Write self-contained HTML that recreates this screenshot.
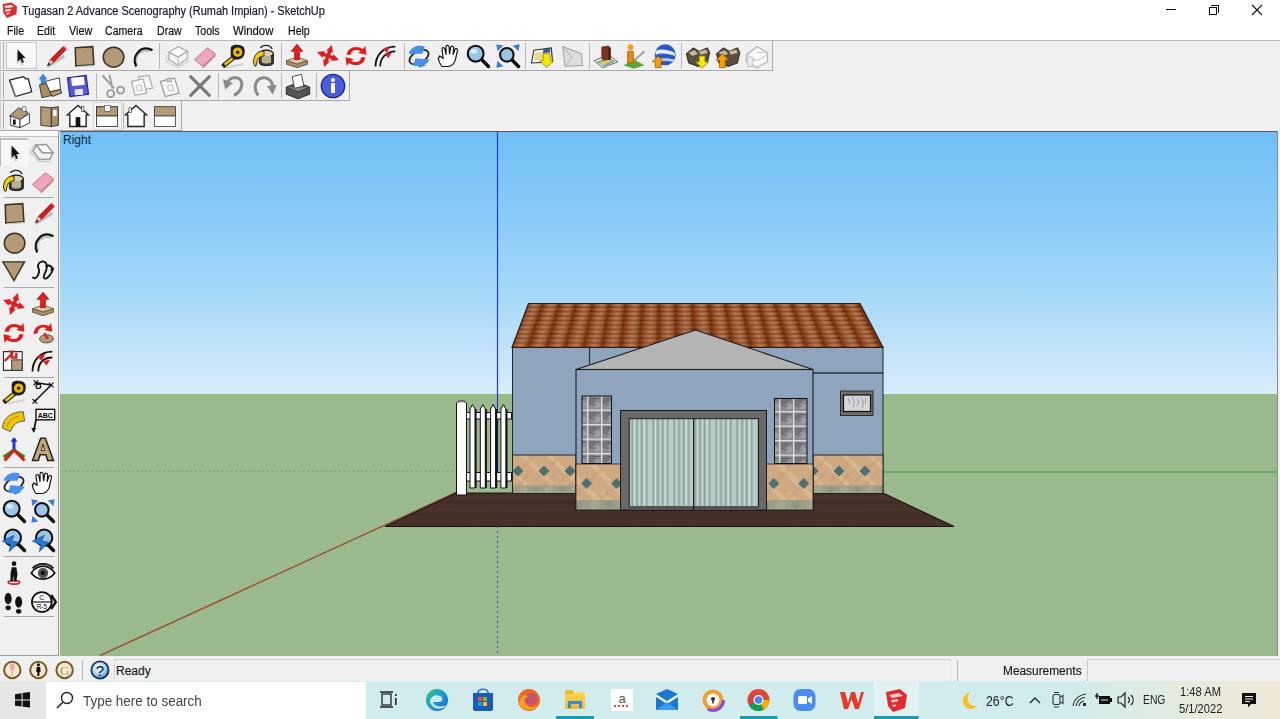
<!DOCTYPE html>
<html><head><meta charset="utf-8">
<style>
*{margin:0;padding:0;box-sizing:border-box}
html,body{width:1280px;height:719px;overflow:hidden;background:#f0f0f0;font-family:"Liberation Sans",sans-serif;font-size:12px;color:#000;position:relative}
.a{position:absolute}
svg.a{overflow:visible}
.menu{top:21px;height:20px;line-height:20px;white-space:nowrap;transform:scaleX(0.88);transform-origin:0 0;color:#111;-webkit-text-stroke:0.2px #111}
</style></head><body>
<div class="a" style="left:0;top:0;width:1280px;height:40px;background:#fff"></div>
<svg class="a" style="left:1px;top:1px" width="17" height="18" viewBox="0 0 17 18">
<path d="M1.5 3 L10.5 1.5 L16 5.5 L15.5 13 L6 17 L2.5 12 Z" fill="#e22a2a"/>
<path d="M3 5 L10 3.8 L13 6 L4.5 7.3 Z M3.8 8.8 L10 7.8 L10 9.8 L4.5 10.8 Z M5 12 L8.5 11.3 L8.5 13 L5.5 13.8 Z" fill="#fcdcdc"/>
</svg>
<div class="a" style="left:22px;top:1px;height:20px;line-height:20px;white-space:nowrap;transform:scaleX(0.913);transform-origin:0 0;color:#1a1a2a;-webkit-text-stroke:0.2px #1a1a2a">Tugasan 2 Advance Scenography (Rumah Impian) - SketchUp</div>
<div class="a" style="left:1166px;top:9px;width:10px;height:1px;background:#111"></div>
<div class="a" style="left:1209px;top:7px;width:8px;height:8px;border:1px solid #111;background:#fff"></div>
<div class="a" style="left:1211px;top:5px;width:8px;height:8px;border-top:1px solid #111;border-right:1px solid #111"></div>
<svg class="a" style="left:1251px;top:4px" width="12" height="12" viewBox="0 0 12 12"><path d="M1 1 L11 11 M11 1 L1 11" stroke="#111" stroke-width="1.1"/></svg>
<div class="a" style="left:0;top:40px;width:1280px;height:1px;background:#b9b9b9"></div>
<div class="a menu" style="left:7px;transform:scaleX(0.88)">File</div>
<div class="a menu" style="left:37px;transform:scaleX(0.88)">Edit</div>
<div class="a menu" style="left:69px;transform:scaleX(0.9)">View</div>
<div class="a menu" style="left:105px;transform:scaleX(0.88)">Camera</div>
<div class="a menu" style="left:157px;transform:scaleX(0.88)">Draw</div>
<div class="a menu" style="left:195px;transform:scaleX(0.88)">Tools</div>
<div class="a menu" style="left:233px;transform:scaleX(0.945)">Window</div>
<div class="a menu" style="left:288px;transform:scaleX(0.88)">Help</div>
<div class="a" style="left:0;top:70px;width:772px;height:1px;background:#a9a9a9"></div>
<div class="a" style="left:772px;top:41px;width:1px;height:30px;background:#a9a9a9"></div>
<div class="a" style="left:0;top:100px;width:349px;height:1px;background:#a9a9a9"></div>
<div class="a" style="left:349px;top:71px;width:1px;height:30px;background:#a9a9a9"></div>
<div class="a" style="left:0;top:130px;width:181px;height:1px;background:#a9a9a9"></div>
<div class="a" style="left:181px;top:101px;width:1px;height:30px;background:#a9a9a9"></div>
<div class="a" style="left:3px;top:42px;width:1px;height:27px;background:#b0b0b0"></div>
<div class="a" style="left:0;top:42px;width:1px;height:27px;background:#d0d0d0"></div>
<div class="a" style="left:3px;top:72px;width:1px;height:27px;background:#b0b0b0"></div>
<div class="a" style="left:0;top:72px;width:1px;height:27px;background:#d0d0d0"></div>
<div class="a" style="left:3px;top:102px;width:1px;height:27px;background:#b0b0b0"></div>
<div class="a" style="left:0;top:102px;width:1px;height:27px;background:#d0d0d0"></div>
<div class="a" style="left:6px;top:42px;width:31px;height:27px;border:1px solid #c8c8c8;background:#f7f7f7"></div>
<div class="a" style="left:93px;top:102px;width:29px;height:28px;border:1px solid #d8d8d8;background:#f6f6f6"></div>
<svg class="a" style="left:6.0px;top:42.0px" width="28" height="28" viewBox="0 0 24 24"><g transform="translate(3.5,3.5) scale(.72)"><path d="M9.5 5.5 L9.5 20 L12.8 16.8 L15 21.5 L17 20.6 L14.8 16 L19 15.8 Z" fill="#888" opacity=".45" transform="translate(-1.5,1.5)"/><path d="M9 4 L9 18.5 L12.3 15.3 L14.5 20 L16.5 19.1 L14.3 14.5 L18.5 14.3 Z" fill="#111"/></g></svg>
<svg class="a" style="left:41.0px;top:42.0px" width="28" height="28" viewBox="0 0 24 24"><path d="M6 21 L20 12" stroke="#bbb" stroke-width="2.5"/><path d="M5.5 20.5 L8 15 L19 4 L21.5 6.5 L10.5 17.5 Z" fill="#d81c1c" stroke="#600" stroke-width=".6"/><path d="M5.5 20.5 L8 15 L10.5 17.5 Z" fill="#e8d0a8"/><path d="M5.5 20.5 L6.8 17.5 L8.3 19 Z" fill="#222"/><path d="M19 4 L21.5 6.5 L22.3 5.7 L19.8 3.2Z" fill="#f5b"/></svg>
<svg class="a" style="left:70.0px;top:42.0px" width="28" height="28" viewBox="0 0 24 24"><path d="M4.5 5 L19.5 4 L20.5 19.5 L5 20.5 Z" fill="#b39b78" stroke="#3a3024" stroke-width="1.3"/><path d="M6 21.3 L21 20.3" stroke="#ccc" stroke-width="1"/></svg>
<svg class="a" style="left:99.0px;top:42.0px" width="28" height="28" viewBox="0 0 24 24"><ellipse cx="12.5" cy="13" rx="8.8" ry="8.5" fill="#b39b78" stroke="#3a3024" stroke-width="1.3"/></svg>
<svg class="a" style="left:128.0px;top:42.0px" width="28" height="28" viewBox="0 0 24 24"><path d="M8 20 C5 12 11 6 19 8" stroke="#bbb" stroke-width="1.4" fill="none"/><path d="M7 21 C2.5 12 11 2 21 7" stroke="#111" stroke-width="1.9" fill="none"/></svg>
<svg class="a" style="left:163.0px;top:42.0px" width="28" height="28" viewBox="0 0 24 24"><path d="M5 9 L13 4 L21 8 L13 13 Z" fill="#fff" stroke="#b4b4b4" stroke-width="1.2"/><path d="M5 9 L5 15 L13 20 L21 14 L21 8 L13 13 Z" fill="#f4f4f4" stroke="#b4b4b4" stroke-width="1.2"/><path d="M13 13 L13 20" stroke="#c4c4c4"/><path d="M3 11 L3 17 L13 22 L23 16" stroke="#d0d0d0" fill="none"/></svg>
<svg class="a" style="left:191.0px;top:42.0px" width="28" height="28" viewBox="0 0 24 24"><path d="M3 15 L14 5 L21 10 L10 21 Z" fill="#f2a4bd" stroke="#b07888" stroke-width=".8"/><path d="M10 21 L21 10 L21 12.5 L10 23 Z" fill="#c88"/><path d="M4 17 L20 13" stroke="#ccc" stroke-width="1" opacity=".4"/></svg>
<svg class="a" style="left:219.0px;top:42.0px" width="28" height="28" viewBox="0 0 24 24"><path d="M6 22 L21 19" stroke="#bbb" stroke-width="2" opacity=".5"/><path d="M10 6 C10 3 13 2 17 2.5 C21 3 22.5 5 22 9 C21.5 13 19.5 15 15 15 C11 15 10 13 10 10 Z" fill="#1e1e1e"/><circle cx="16" cy="8.7" r="4" fill="#f2b800"/><circle cx="16" cy="8.7" r="1.5" fill="#2a2a2a"/><path d="M3.5 18.5 L11 12.5 L13 15 L5.5 21 Z" fill="#f2c400" stroke="#222" stroke-width=".9"/><path d="M2.5 19 L5 22" stroke="#222" stroke-width="1.6"/></svg>
<svg class="a" style="left:250.0px;top:42.0px" width="28" height="28" viewBox="0 0 24 24"><path d="M8 10 L8 18 C8 21 20 21 20 18 L20 10 Z" fill="#3a3a36" stroke="#111" stroke-width=".8"/><ellipse cx="14" cy="10" rx="6" ry="3" fill="#d8d0b0" stroke="#111" stroke-width="1"/><path d="M10 12 L10 17 C10 19 18 19 18 17 L18 12" fill="#cfc6a4" opacity=".85"/><path d="M9 5 C11 2 17 2 19 6" stroke="#222" stroke-width="1.2" fill="none"/><path d="M12 8 C8 7 4 10 3 16 C3 19 4 21 5 21 L6 17 C6 14 9 12 12 12 Z" fill="#f2d200" stroke="#222" stroke-width=".8"/></svg>
<svg class="a" style="left:283.0px;top:42.0px" width="28" height="28" viewBox="0 0 24 24"><path d="M3 16 L12 13 L21 16 L12 19 Z" fill="#d8c8a8" stroke="#6b5b40" stroke-width=".8"/><path d="M3 16 L3 19 L12 22 L21 19 L21 16 L12 19 Z" fill="#a8906a" stroke="#6b5b40" stroke-width=".8"/><path d="M12 2 L17 8 L14 8 L14 15 L10 15 L10 8 L7 8 Z" fill="#e41e1e" stroke="#900" stroke-width=".6"/></svg>
<svg class="a" style="left:314.0px;top:42.0px" width="28" height="28" viewBox="0 0 24 24"><path d="M12 2 L15 8 L13.5 8 L13.5 10.5 L16 10.5 L16 9 L22 12 L16 15 L16 13.5 L13.5 13.5 L13.5 16 L15 16 L12 22 L9 16 L10.5 16 L10.5 13.5 L8 13.5 L8 15 L2 12 L8 9 L8 10.5 L10.5 10.5 L10.5 8 L9 8 Z" fill="#e11c1c" transform="rotate(20 12 12)"/></svg>
<svg class="a" style="left:342.0px;top:42.0px" width="28" height="28" viewBox="0 0 24 24"><path d="M4 11 C4.5 5 12 2 18 6 L20 3.5 L21 11 L14 9.5 L16 8 C12 5.5 8 7 7.5 11 Z" fill="#e11c1c"/><path d="M20 13 C19.5 19 12 22 6 18 L4 20.5 L3 13 L10 14.5 L8 16 C12 18.5 16 17 16.5 13 Z" fill="#e11c1c"/></svg>
<svg class="a" style="left:372.0px;top:42.0px" width="28" height="28" viewBox="0 0 24 24"><path d="M3 21 C3 12 9 4 20 4" stroke="#111" stroke-width="1.6" fill="none"/><path d="M7 21 C7 14 12 8 20 8" stroke="#111" stroke-width="1.4" fill="none"/><path d="M9 6 L15 4 L13 9 Z M11 10 L17 9 L14 14 Z" fill="#e11c1c"/></svg>
<svg class="a" style="left:405.0px;top:42.0px" width="28" height="28" viewBox="0 0 24 24"><ellipse cx="12" cy="13" rx="9" ry="5" stroke="#222" stroke-width="1.5" fill="none" transform="rotate(-30 12 13)"/><path d="M6 6 L12 3 L12 8 Z M18 20 L12 22 L12 17 Z" fill="#3b7fe0"/><path d="M3 10 C5 4 12 2 17 4 L15 10 Z M21 15 C19 20 12 22 7 20 L9 14 Z" fill="#4a90e8"/></svg>
<svg class="a" style="left:435.0px;top:42.0px" width="28" height="28" viewBox="0 0 24 24"><path d="M6 21 C3 17 2 14 4 12 L7 14 L6 6 C6 4.5 8 4.5 8.5 6 L9.5 11 L9.5 4 C9.5 2.5 11.5 2.5 12 4 L12.5 10.5 L13.5 4.5 C14 3 16 3.5 16 5 L15.5 11 L17 6.5 C17.5 5 19.5 5.5 19.3 7 L17.5 15 C17 18 14 21 11 21 Z" fill="#fff" stroke="#111" stroke-width="1"/></svg>
<svg class="a" style="left:464.0px;top:42.0px" width="28" height="28" viewBox="0 0 24 24"><path d="M14 14 L21 21" stroke="#111" stroke-width="3" stroke-linecap="round"/><circle cx="10" cy="10" r="6.8" fill="#9cc4e8" stroke="#111" stroke-width="1.8"/><ellipse cx="8.5" cy="8" rx="3" ry="2" fill="#d8ecfa"/></svg>
<svg class="a" style="left:494.0px;top:42.0px" width="28" height="28" viewBox="0 0 24 24"><path d="M14 14 L21 21" stroke="#111" stroke-width="3" stroke-linecap="round"/><circle cx="11" cy="11" r="5.8" fill="#9cc4e8" stroke="#111" stroke-width="1.8"/><path d="M2 2 L8 3 L3 8 Z M22 2 L16 3 L21 8 Z M2 22 L3 16 L8 21 Z" fill="#3d7fd6"/></svg>
<svg class="a" style="left:528.0px;top:42.0px" width="28" height="28" viewBox="0 0 24 24"><path d="M3 18 L5 7 L20 5 L21 17 Z" fill="#fff" stroke="#333" stroke-width="1"/><path d="M5 16 L6 9 L14 8 L14 15 Z" fill="#ead68c"/><path d="M13 6 L19 5.5 L19 9 L13 9.5 Z" fill="#3a5a90"/><path d="M13 10 L19 10 L19 16 L22 16 L16 22 L10 16 L13 16 Z" fill="#f5e800" stroke="#887700" stroke-width=".6"/></svg>
<svg class="a" style="left:558.0px;top:42.0px" width="28" height="28" viewBox="0 0 24 24"><path d="M4 4 L20 10 L21 20 L6 21 Z" fill="#ddd" stroke="#aaa" stroke-width="1"/><path d="M4 4 L12 13 L6 21" stroke="#bbb" fill="none"/></svg>
<svg class="a" style="left:592.0px;top:42.0px" width="28" height="28" viewBox="0 0 24 24"><path d="M2 16 L14 11 L22 17 L9 22 Z" fill="#fff" stroke="#555" stroke-width=".8"/><path d="M4 17 L14 13 L20 17 L10 21 Z" fill="#6cb0a0"/><path d="M6 18 L14 14.5 L17 16.5 L9 20 Z" fill="#e0c860"/><path d="M8 4 L14 3 L16 5 L16 15 L10 16 L8 14 Z" fill="#7a3424"/><path d="M14 5 L16 5 L16 15 L14 15.5 Z" fill="#4a1c12"/></svg>
<svg class="a" style="left:620.0px;top:42.0px" width="28" height="28" viewBox="0 0 24 24"><path d="M3 20 L12 15 L21 20 L12 23 Z" fill="#5aa63a"/><path d="M12 16 L21 8" stroke="#999" stroke-width="1.6"/><circle cx="9" cy="4.5" r="2.5" fill="#f0a020"/><path d="M6.5 8 L11.5 8 L11.5 18 L6.5 18 Z" fill="#e88a10" stroke="#a05a00" stroke-width=".6"/></svg>
<svg class="a" style="left:650.0px;top:42.0px" width="28" height="28" viewBox="0 0 24 24"><circle cx="13" cy="11" r="9" fill="#2a58c8"/><path d="M4.5 8 C9 5 16 7 21 9 L21.5 12 C16 10 9 9 5 11 Z" fill="#fff" opacity=".9"/><path d="M6 15 C11 13 17 14 21 15 L20 17 C15 16 10 16 7 17 Z" fill="#cde" opacity=".9"/><path d="M7 12 L12 17 L9.5 17 L9.5 22 L4.5 22 L4.5 17 L2 17 Z" fill="#f5a000" stroke="#905000" stroke-width=".6"/></svg>
<svg class="a" style="left:684.0px;top:42.0px" width="28" height="28" viewBox="0 0 24 24"><path d="M2 10 L8 5 L13 8 L20 5 L22 9 L20 18 L12 21 L4 18 Z" fill="#5a5040" stroke="#222" stroke-width=".8"/><path d="M4 9 L9 7 L12 10 L7 12 Z M13 8 L19 6.5 L20 9.5 L14 11 Z" fill="#c8b898"/><path d="M13 12 L18 12 L18 17 L21 17 L15.5 22.5 L10 17 L13 17 Z" fill="#f5ec00" stroke="#807000" stroke-width=".6"/></svg>
<svg class="a" style="left:713.0px;top:42.0px" width="28" height="28" viewBox="0 0 24 24"><path d="M3 10 L9 5 L14 8 L21 5 L23 9 L21 18 L13 21 L5 18 Z" fill="#5a5040" stroke="#222" stroke-width=".8"/><path d="M5 9 L10 7 L13 10 L8 12 Z M14 8 L20 6.5 L21 9.5 L15 11 Z" fill="#c8b898"/><path d="M8 10 L13.5 15.5 L10.5 15.5 L10.5 22 L5.5 22 L5.5 15.5 L2.5 15.5 Z" fill="#f5a000" stroke="#905000" stroke-width=".6"/></svg>
<svg class="a" style="left:743.0px;top:42.0px" width="28" height="28" viewBox="0 0 24 24"><path d="M3 11 L12 4 L21 9 L21 17 L12 22 L3 17 Z" fill="#fafafa" stroke="#bbb" stroke-width="1.2"/><path d="M12 9 L21 9 M3 11 L12 16 L21 11" stroke="#ccc" fill="none"/><path d="M2 16 L6 12 L10 16 L8 16 L8 21 L4 21 L4 16 Z" fill="#eee" stroke="#bbb" stroke-width=".8"/></svg>
<div class="a" style="left:159px;top:43px;width:1px;height:26px;background:#b8b8b8"></div>
<div class="a" style="left:281px;top:43px;width:1px;height:26px;background:#b8b8b8"></div>
<div class="a" style="left:404px;top:43px;width:1px;height:26px;background:#b8b8b8"></div>
<div class="a" style="left:525px;top:43px;width:1px;height:26px;background:#b8b8b8"></div>
<div class="a" style="left:589px;top:43px;width:1px;height:26px;background:#b8b8b8"></div>
<div class="a" style="left:681px;top:43px;width:1px;height:26px;background:#b8b8b8"></div>
<svg class="a" style="left:6.0px;top:72.0px" width="28" height="28" viewBox="0 0 24 24"><path d="M3 7 L15 4 L17 6 L19 5.5 L22 17 L8 21 Z" fill="#fff" stroke="#222" stroke-width="1.1"/><path d="M4 8 L8.5 21.5" stroke="#888" stroke-width="1"/></svg>
<svg class="a" style="left:36.0px;top:72.0px" width="28" height="28" viewBox="0 0 24 24"><path d="M3 11 L12 9 L14 20 L5 22 Z" fill="#a88c60" stroke="#333" stroke-width=".8"/><path d="M8 8 L20 5 L21 15 L12 17 Z" fill="#fff" stroke="#333" stroke-width=".8"/><path d="M12 17 L21 15 L22 18 L14 21 Z" fill="#b89a6c" stroke="#333" stroke-width=".8"/><path d="M3 6 L6 2 L9 6 L7.5 6 L7.5 10 L4.5 10 L4.5 6 Z" fill="#2e90e8" stroke="#1a5a9a" stroke-width=".6"/></svg>
<svg class="a" style="left:64.0px;top:72.0px" width="28" height="28" viewBox="0 0 24 24"><path d="M3 5 L19 3 L21 19 L5 21 Z" fill="#5a5ad8" stroke="#222296" stroke-width="1"/><path d="M6 5 L17 4 L17.8 11 L7 12 Z" fill="#fff"/><path d="M9 15 L16 14.3 L16.5 19.5 L9.5 20 Z" fill="#e8e8f8"/></svg>
<svg class="a" style="left:99.0px;top:72.0px" width="28" height="28" viewBox="0 0 24 24"><path d="M3 3 L13 14 M9 2.5 L11.5 14" stroke="#9a9a9a" stroke-width="1.6"/><circle cx="10" cy="18.5" r="3" fill="none" stroke="#999" stroke-width="1.6"/><circle cx="18.5" cy="15.5" r="3" fill="none" stroke="#999" stroke-width="1.6"/></svg>
<svg class="a" style="left:128.0px;top:72.0px" width="28" height="28" viewBox="0 0 24 24"><path d="M9 4 L18 3 L21 14 L12 15 Z" fill="#f6f6f6" stroke="#aaa"/><path d="M3 8 L13 6 L16 18 L6 20 Z" fill="#fafafa" stroke="#aaa"/><path d="M7 12 L11 11 L12 16 L8 16 Z" fill="none" stroke="#bbb" stroke-width=".8"/></svg>
<svg class="a" style="left:157.0px;top:72.0px" width="28" height="28" viewBox="0 0 24 24"><path d="M3 8 L15 5 L19 18 L7 21 Z" fill="#f6f6f6" stroke="#999"/><path d="M8 6 L12 5 L12.5 8 L8.5 8.5 Z" fill="#ccc" stroke="#999" stroke-width=".7"/><path d="M9 12 L13 11 L14 16 L10 16 Z" fill="none" stroke="#bbb" stroke-width=".8"/></svg>
<svg class="a" style="left:186.0px;top:72.0px" width="28" height="28" viewBox="0 0 24 24"><path d="M4 4 L20 20 M20 4 L4 20" stroke="#777" stroke-width="2.6" stroke-linecap="round"/></svg>
<svg class="a" style="left:220.0px;top:72.0px" width="28" height="28" viewBox="0 0 24 24"><path d="M12 20 C20 16 21 6 14 5 C11 4.5 8 6 7 8" stroke="#8a8a8a" stroke-width="2.6" fill="none"/><path d="M2.5 6 L11 9.5 L4.5 15 Z" fill="#8a8a8a"/></svg>
<svg class="a" style="left:250.0px;top:72.0px" width="28" height="28" viewBox="0 0 24 24"><path d="M7 20 C2 13 5 5 12 5 C16 5 19 8 19.5 12" stroke="#8a8a8a" stroke-width="2.6" fill="none"/><path d="M14.5 12 L23 11 L19.5 19.5 Z" fill="#8a8a8a"/></svg>
<svg class="a" style="left:284.0px;top:72.0px" width="28" height="28" viewBox="0 0 24 24"><path d="M2 13 L12 9 L22 13 L22 19 L12 23 L2 19 Z" fill="#555" stroke="#222" stroke-width=".8"/><path d="M2 13 L12 17 L22 13" fill="#888" stroke="#222" stroke-width=".6"/><path d="M7 4 L15 2 L17 12 L9 14 Z" fill="#fff" stroke="#444" stroke-width=".8"/></svg>
<svg class="a" style="left:319.0px;top:72.0px" width="28" height="28" viewBox="0 0 24 24"><circle cx="12" cy="12" r="10" fill="#4a5ce0" stroke="#1a2a80" stroke-width="1.2"/><circle cx="12" cy="6.8" r="1.7" fill="#fff"/><rect x="10.3" y="9.5" width="3.4" height="8.5" fill="#fff"/></svg>
<div class="a" style="left:96px;top:73px;width:1px;height:26px;background:#b8b8b8"></div>
<div class="a" style="left:218px;top:73px;width:1px;height:26px;background:#b8b8b8"></div>
<div class="a" style="left:281px;top:73px;width:1px;height:26px;background:#b8b8b8"></div>
<div class="a" style="left:316px;top:73px;width:1px;height:26px;background:#b8b8b8"></div>
<svg class="a" style="left:6.0px;top:102.0px" width="28" height="28" viewBox="0 0 24 24"><path d="M3 12 L11 5 L19 9 L12 16 Z" fill="#b39b78" stroke="#333" stroke-width=".8"/><path d="M4 12 L4 20 L12 22 L12 15 Z" fill="#fff" stroke="#333" stroke-width=".8"/><path d="M12 15 L20 10 L20 18 L12 22 Z" fill="#fff" stroke="#333" stroke-width=".8"/><rect x="6" y="15" width="2.3" height="4.5" fill="#111"/><path d="M14 4 L17 4 L17 8 L14 8 Z" fill="#fff" stroke="#555" stroke-width=".6"/></svg>
<svg class="a" style="left:35.0px;top:102.0px" width="28" height="28" viewBox="0 0 24 24"><path d="M5 4 L14 5 L14 21 L5 20 Z" fill="#b39b78" stroke="#333" stroke-width=".8"/><path d="M14 5 L20 4 L20 20 L14 21 Z" fill="#a88f6c" stroke="#333" stroke-width=".8"/><rect x="15.5" y="7" width="3" height="5" fill="#fff"/></svg>
<svg class="a" style="left:64.0px;top:102.0px" width="28" height="28" viewBox="0 0 24 24"><path d="M12 3 L21 11 L19 11 L19 21 L5 21 L5 11 L3 11 Z" fill="#fff" stroke="#222" stroke-width="1.2"/><rect x="10" y="13" width="4" height="8" fill="#111"/><rect x="15" y="4" width="2" height="4" fill="#fff" stroke="#333" stroke-width=".6"/></svg>
<svg class="a" style="left:93.0px;top:102.0px" width="28" height="28" viewBox="0 0 24 24"><rect x="3" y="4" width="18" height="8" fill="#b39b78" stroke="#333" stroke-width=".8"/><rect x="3" y="12" width="18" height="9" fill="#fff" stroke="#444" stroke-width=".8"/><rect x="10" y="3" width="5" height="5" fill="#fff" stroke="#555" stroke-width=".6"/></svg>
<svg class="a" style="left:122.0px;top:102.0px" width="28" height="28" viewBox="0 0 24 24"><path d="M12 3 L21 11 L19 11 L19 21 L5 21 L5 11 L3 11 Z" fill="#fff" stroke="#222" stroke-width="1.2"/><rect x="6" y="5" width="2" height="4" fill="#fff" stroke="#333" stroke-width=".6"/></svg>
<svg class="a" style="left:151.0px;top:102.0px" width="28" height="28" viewBox="0 0 24 24"><rect x="3" y="4" width="18" height="8" fill="#b39b78" stroke="#444" stroke-width=".8"/><rect x="3" y="12" width="18" height="9" fill="#fff" stroke="#555" stroke-width=".8"/></svg>
<div class="a" style="left:123px;top:103px;width:1px;height:26px;background:#b8b8b8"></div>
<div class="a" style="left:58px;top:131px;width:1px;height:525px;background:#9a9a9a"></div>
<div class="a" style="left:0;top:131px;width:58px;height:6px;background:#f9f9f9;border-bottom:1px solid #c4c4c4"></div>
<div class="a" style="left:0;top:138px;width:28px;height:28px;background:#f7f7f7;border-top:2px solid #c0c0c0;border-left:1px solid #b8b8b8"></div>
<svg class="a" style="left:0.0px;top:138.0px" width="28" height="28" viewBox="0 0 24 24"><g transform="translate(3.5,3.5) scale(.72)"><path d="M9.5 5.5 L9.5 20 L12.8 16.8 L15 21.5 L17 20.6 L14.8 16 L19 15.8 Z" fill="#888" opacity=".45" transform="translate(-1.5,1.5)"/><path d="M9 4 L9 18.5 L12.3 15.3 L14.5 20 L16.5 19.1 L14.3 14.5 L18.5 14.3 Z" fill="#111"/></g></svg>
<svg class="a" style="left:29.0px;top:138.0px" width="28" height="28" viewBox="0 0 24 24"><g transform="rotate(25 12 12)"><path d="M4 9 L12 5 L20 9 L12 13 Z" fill="#fff" stroke="#9a9a9a" stroke-width="1.3"/><path d="M4 9 L4 15 L12 19 L20 15 L20 9 L12 13 Z" fill="#f2f2f2" stroke="#9a9a9a" stroke-width="1.3"/><path d="M2.5 10 L2.5 16.5 L12 21 L21.5 16.5" stroke="#cfcfcf" stroke-width="1.2" fill="none"/></g></svg>
<svg class="a" style="left:0.0px;top:167.0px" width="28" height="28" viewBox="0 0 24 24"><path d="M8 10 L8 18 C8 21 20 21 20 18 L20 10 Z" fill="#3a3a36" stroke="#111" stroke-width=".8"/><ellipse cx="14" cy="10" rx="6" ry="3" fill="#d8d0b0" stroke="#111" stroke-width="1"/><path d="M10 12 L10 17 C10 19 18 19 18 17 L18 12" fill="#cfc6a4" opacity=".85"/><path d="M9 5 C11 2 17 2 19 6" stroke="#222" stroke-width="1.2" fill="none"/><path d="M12 8 C8 7 4 10 3 16 C3 19 4 21 5 21 L6 17 C6 14 9 12 12 12 Z" fill="#f2d200" stroke="#222" stroke-width=".8"/></svg>
<svg class="a" style="left:29.0px;top:167.0px" width="28" height="28" viewBox="0 0 24 24"><path d="M3 15 L14 5 L21 10 L10 21 Z" fill="#f2a4bd" stroke="#b07888" stroke-width=".8"/><path d="M10 21 L21 10 L21 12.5 L10 23 Z" fill="#c88"/><path d="M4 17 L20 13" stroke="#ccc" stroke-width="1" opacity=".4"/></svg>
<svg class="a" style="left:0.0px;top:199.0px" width="28" height="28" viewBox="0 0 24 24"><path d="M4.5 5 L19.5 4 L20.5 19.5 L5 20.5 Z" fill="#b39b78" stroke="#3a3024" stroke-width="1.3"/><path d="M6 21.3 L21 20.3" stroke="#ccc" stroke-width="1"/></svg>
<svg class="a" style="left:29.0px;top:199.0px" width="28" height="28" viewBox="0 0 24 24"><path d="M6 21 L20 12" stroke="#bbb" stroke-width="2.5"/><path d="M5.5 20.5 L8 15 L19 4 L21.5 6.5 L10.5 17.5 Z" fill="#d81c1c" stroke="#600" stroke-width=".6"/><path d="M5.5 20.5 L8 15 L10.5 17.5 Z" fill="#e8d0a8"/><path d="M5.5 20.5 L6.8 17.5 L8.3 19 Z" fill="#222"/><path d="M19 4 L21.5 6.5 L22.3 5.7 L19.8 3.2Z" fill="#f5b"/></svg>
<svg class="a" style="left:0.0px;top:228.0px" width="28" height="28" viewBox="0 0 24 24"><ellipse cx="12.5" cy="13" rx="8.8" ry="8.5" fill="#b39b78" stroke="#3a3024" stroke-width="1.3"/></svg>
<svg class="a" style="left:29.0px;top:228.0px" width="28" height="28" viewBox="0 0 24 24"><path d="M8 20 C5 12 11 6 19 8" stroke="#bbb" stroke-width="1.4" fill="none"/><path d="M7 21 C2.5 12 11 2 21 7" stroke="#111" stroke-width="1.9" fill="none"/></svg>
<svg class="a" style="left:0.0px;top:256.0px" width="28" height="28" viewBox="0 0 24 24"><path d="M2.5 5 L21 5 L12 21 Z" fill="#b39b78" stroke="#3a3024" stroke-width="1.2"/></svg>
<svg class="a" style="left:29.0px;top:256.0px" width="28" height="28" viewBox="0 0 24 24"><path d="M3 18 C6 22 10 14 8 10 C6 6 13 2 15 7 C17 12 11 17 13 19 C15 21 20 15 21 10 M14 9 C18 7 21 9 19 13" stroke="#111" stroke-width="1.6" fill="none"/></svg>
<svg class="a" style="left:0.0px;top:290.0px" width="28" height="28" viewBox="0 0 24 24"><path d="M12 2 L15 8 L13.5 8 L13.5 10.5 L16 10.5 L16 9 L22 12 L16 15 L16 13.5 L13.5 13.5 L13.5 16 L15 16 L12 22 L9 16 L10.5 16 L10.5 13.5 L8 13.5 L8 15 L2 12 L8 9 L8 10.5 L10.5 10.5 L10.5 8 L9 8 Z" fill="#e11c1c" transform="rotate(20 12 12)"/></svg>
<svg class="a" style="left:29.0px;top:290.0px" width="28" height="28" viewBox="0 0 24 24"><path d="M3 16 L12 13 L21 16 L12 19 Z" fill="#d8c8a8" stroke="#6b5b40" stroke-width=".8"/><path d="M3 16 L3 19 L12 22 L21 19 L21 16 L12 19 Z" fill="#a8906a" stroke="#6b5b40" stroke-width=".8"/><path d="M12 2 L17 8 L14 8 L14 15 L10 15 L10 8 L7 8 Z" fill="#e41e1e" stroke="#900" stroke-width=".6"/></svg>
<svg class="a" style="left:0.0px;top:319.0px" width="28" height="28" viewBox="0 0 24 24"><path d="M4 11 C4.5 5 12 2 18 6 L20 3.5 L21 11 L14 9.5 L16 8 C12 5.5 8 7 7.5 11 Z" fill="#e11c1c"/><path d="M20 13 C19.5 19 12 22 6 18 L4 20.5 L3 13 L10 14.5 L8 16 C12 18.5 16 17 16.5 13 Z" fill="#e11c1c"/></svg>
<svg class="a" style="left:29.0px;top:319.0px" width="28" height="28" viewBox="0 0 24 24"><path d="M4 13 C4 6 11 3 17 6 L19 3.5 L20 11 L13 9.5 L15 8 C11 6 7.5 8.5 7.5 12 Z" fill="#e11c1c"/><ellipse cx="15" cy="17" rx="6" ry="3.5" fill="#b39b78" stroke="#5a4a34" stroke-width=".8"/><path d="M13 12 L16 17" stroke="#e11c1c" stroke-width="2"/></svg>
<svg class="a" style="left:0.0px;top:347.0px" width="28" height="28" viewBox="0 0 24 24"><path d="M3 4 L19 4 L19 20 L3 20 Z" fill="#fff" stroke="#333" stroke-width="1"/><path d="M10 11 L19 11 L19 20 L10 20 Z" fill="#b39b78" stroke="#333" stroke-width=".8"/><path d="M4 12 L10 6 L10 9 L14 9 L14 5" stroke="#e11c1c" stroke-width="2" fill="none"/><path d="M7 3 L12 3 L11 8 Z" fill="#e11c1c"/></svg>
<svg class="a" style="left:29.0px;top:347.0px" width="28" height="28" viewBox="0 0 24 24"><path d="M3 21 C3 12 9 4 20 4" stroke="#111" stroke-width="1.6" fill="none"/><path d="M8 21 C8 14 12 9 20 9" stroke="#111" stroke-width="1.6" fill="none"/><path d="M7 8 L14 6 L11 12 Z M12 12 L18 11 L15 16 Z" fill="#e11c1c"/></svg>
<svg class="a" style="left:0.0px;top:378.0px" width="28" height="28" viewBox="0 0 24 24"><path d="M6 22 L21 19" stroke="#bbb" stroke-width="2" opacity=".5"/><path d="M10 6 C10 3 13 2 17 2.5 C21 3 22.5 5 22 9 C21.5 13 19.5 15 15 15 C11 15 10 13 10 10 Z" fill="#1e1e1e"/><circle cx="16" cy="8.7" r="4" fill="#f2b800"/><circle cx="16" cy="8.7" r="1.5" fill="#2a2a2a"/><path d="M3.5 18.5 L11 12.5 L13 15 L5.5 21 Z" fill="#f2c400" stroke="#222" stroke-width=".9"/><path d="M2.5 19 L5 22" stroke="#222" stroke-width="1.6"/></svg>
<svg class="a" style="left:29.0px;top:378.0px" width="28" height="28" viewBox="0 0 24 24"><path d="M4 6 L8 2 M8 6 L4 2 M17 4 L21 8 M21 4 L17 8 M3 22 L7 18 M7 22 L3 18" stroke="#111" stroke-width="1"/><path d="M6 4 L19 6 M5 20 L19 6" stroke="#111" stroke-width="1.3"/><circle cx="8" cy="7" r="2" fill="none" stroke="#111"/></svg>
<svg class="a" style="left:0.0px;top:407.0px" width="28" height="28" viewBox="0 0 24 24"><path d="M2 18 C3 9 10 4 20 4 L21 12 C15 12 11 15 9 21 Z" fill="#f2c400" stroke="#555" stroke-width=".8"/><path d="M6 17 C7 12 11 9 16 8" stroke="#a08000" stroke-width=".8" fill="none"/></svg>
<svg class="a" style="left:29.0px;top:407.0px" width="28" height="28" viewBox="0 0 24 24"><rect x="6" y="2" width="16" height="9" fill="#fff" stroke="#111" stroke-width="1.2"/><text x="14" y="9" font-size="6" font-family="Liberation Sans" font-weight="bold" text-anchor="middle">ABC</text><path d="M6 11 L4 21" stroke="#111" stroke-width="1.5"/><path d="M2 18 L4 22 L6 18 Z" fill="#111"/></svg>
<svg class="a" style="left:0.0px;top:436.0px" width="28" height="28" viewBox="0 0 24 24"><path d="M12 12 L12 2" stroke="#1a3ad8" stroke-width="2.6"/><path d="M9 5 L12 1 L15 5 Z" fill="#1a3ad8"/><path d="M12 12 L3 18 M12 12 L21 18" stroke="#1a9a1a" stroke-width="2.6"/><path d="M12 12 L4 21" stroke="#d81a1a" stroke-width="2.6"/><path d="M12 12 L21 21" stroke="#d81a1a" stroke-width="2.6"/></svg>
<svg class="a" style="left:29.0px;top:436.0px" width="28" height="28" viewBox="0 0 24 24"><path d="M3 21 L10 2 L14 2 L21 21 L16 21 L14.5 16 L9.5 16 L8 21 Z" fill="#c0a878" stroke="#222" stroke-width="1.3"/><path d="M10.5 12.5 L13.5 12.5 L12 7 Z" fill="#f0f0f0" stroke="#222" stroke-width=".8"/></svg>
<svg class="a" style="left:0.0px;top:469.0px" width="28" height="28" viewBox="0 0 24 24"><ellipse cx="12" cy="13" rx="9" ry="5" stroke="#222" stroke-width="1.5" fill="none" transform="rotate(-30 12 13)"/><path d="M6 6 L12 3 L12 8 Z M18 20 L12 22 L12 17 Z" fill="#3b7fe0"/><path d="M3 10 C5 4 12 2 17 4 L15 10 Z M21 15 C19 20 12 22 7 20 L9 14 Z" fill="#4a90e8"/></svg>
<svg class="a" style="left:29.0px;top:469.0px" width="28" height="28" viewBox="0 0 24 24"><path d="M6 21 C3 17 2 14 4 12 L7 14 L6 6 C6 4.5 8 4.5 8.5 6 L9.5 11 L9.5 4 C9.5 2.5 11.5 2.5 12 4 L12.5 10.5 L13.5 4.5 C14 3 16 3.5 16 5 L15.5 11 L17 6.5 C17.5 5 19.5 5.5 19.3 7 L17.5 15 C17 18 14 21 11 21 Z" fill="#fff" stroke="#111" stroke-width="1"/></svg>
<svg class="a" style="left:0.0px;top:497.0px" width="28" height="28" viewBox="0 0 24 24"><path d="M14 14 L21 21" stroke="#111" stroke-width="3" stroke-linecap="round"/><circle cx="10" cy="10" r="6.8" fill="#9cc4e8" stroke="#111" stroke-width="1.8"/><ellipse cx="8.5" cy="8" rx="3" ry="2" fill="#d8ecfa"/></svg>
<svg class="a" style="left:29.0px;top:497.0px" width="28" height="28" viewBox="0 0 24 24"><path d="M14 14 L21 21" stroke="#111" stroke-width="3" stroke-linecap="round"/><circle cx="11" cy="11" r="5.8" fill="#9cc4e8" stroke="#111" stroke-width="1.8"/><path d="M2 2 L8 3 L3 8 Z M22 2 L16 3 L21 8 Z M2 22 L3 16 L8 21 Z" fill="#3d7fd6"/></svg>
<svg class="a" style="left:0.0px;top:526.0px" width="28" height="28" viewBox="0 0 24 24"><path d="M15 15 L21 21" stroke="#111" stroke-width="3" stroke-linecap="round"/><circle cx="11" cy="10" r="7" fill="#9cc4e8" stroke="#111" stroke-width="1.8"/><path d="M2 13 L12 8 L10 13 L16 14 L8 22 L9 16 Z" fill="#2a78d8" stroke="#134a90" stroke-width=".6"/></svg>
<svg class="a" style="left:29.0px;top:526.0px" width="28" height="28" viewBox="0 0 24 24"><path d="M15 15 L21 21" stroke="#111" stroke-width="3" stroke-linecap="round"/><circle cx="13" cy="10" r="7" fill="#9cc4e8" stroke="#111" stroke-width="1.8"/><path d="M3 13 L13 8 L11 13 L17 14 L9 22 L10 16 Z" fill="#2a78d8" stroke="#134a90" stroke-width=".6"/></svg>
<svg class="a" style="left:0.0px;top:559.0px" width="28" height="28" viewBox="0 0 24 24"><ellipse cx="12" cy="20" rx="5" ry="1.5" fill="none" stroke="#d81a1a" stroke-width="1.4"/><circle cx="12" cy="4" r="2" fill="#111"/><path d="M10 7 L14 7 L15 13 L14 19 L12 19 L12 14 L11 19 L9 19 L9 13 Z" fill="#111"/></svg>
<svg class="a" style="left:29.0px;top:559.0px" width="28" height="28" viewBox="0 0 24 24"><path d="M2 12 C7 4 17 4 22 12 C17 19 7 19 2 12 Z" fill="#fff" stroke="#111" stroke-width="1.5"/><circle cx="12" cy="12" r="4.5" fill="#555"/><circle cx="12" cy="12" r="2" fill="#111"/><path d="M3 8 C8 3 16 3 21 8" stroke="#111" stroke-width="1.5" fill="none"/></svg>
<svg class="a" style="left:0.0px;top:588.0px" width="28" height="28" viewBox="0 0 24 24"><ellipse cx="7" cy="9" rx="3" ry="5" fill="#111"/><ellipse cx="7" cy="17" rx="2.3" ry="2" fill="#111"/><ellipse cx="16" cy="12" rx="3" ry="5" fill="#111"/><ellipse cx="16" cy="20" rx="2.3" ry="2" fill="#111"/></svg>
<svg class="a" style="left:29.0px;top:588.0px" width="28" height="28" viewBox="0 0 24 24"><circle cx="11" cy="12" r="8.5" fill="#fff" stroke="#111" stroke-width="1.5"/><path d="M2 12 L20 12" stroke="#111" stroke-width="1"/><text x="11" y="10" font-size="6" font-family="Liberation Sans" text-anchor="middle">C</text><text x="11" y="18" font-size="5.5" font-family="Liberation Sans" text-anchor="middle">R-5</text><path d="M19 6 L23 12 L19 18" stroke="#111" stroke-width="2" fill="none"/></svg>
<div class="a" style="left:4px;top:197px;width:50px;height:1px;background:#a8a8a8"></div>
<div class="a" style="left:4px;top:287px;width:50px;height:1px;background:#a8a8a8"></div>
<div class="a" style="left:4px;top:377px;width:50px;height:1px;background:#a8a8a8"></div>
<div class="a" style="left:4px;top:467px;width:50px;height:1px;background:#a8a8a8"></div>
<div class="a" style="left:4px;top:556px;width:50px;height:1px;background:#a8a8a8"></div>
<div class="a" style="left:4px;top:616px;width:50px;height:1px;background:#a8a8a8"></div>
<svg class="a" style="left:60px;top:131px" width="1218" height="525" viewBox="60 131 1218 525">
<defs>
<linearGradient id="sky" x1="0" y1="0" x2="0" y2="1"><stop offset="0" stop-color="#6fc0f6"/><stop offset=".33" stop-color="#89cbf7"/><stop offset=".66" stop-color="#aadaf8"/><stop offset="1" stop-color="#d9edfb"/></linearGradient>
<linearGradient id="rcol" x1="0" y1="0" x2="1" y2="0"><stop offset="0" stop-color="#76320f"/><stop offset=".28" stop-color="#a85c30"/><stop offset=".55" stop-color="#b67c52"/><stop offset=".8" stop-color="#a86238"/><stop offset="1" stop-color="#76320f"/></linearGradient>
<linearGradient id="rrow" x1="0" y1="0" x2="0" y2="1"><stop offset="0" stop-color="#d09a6a" stop-opacity=".2"/><stop offset=".5" stop-color="#000" stop-opacity="0"/><stop offset="1" stop-color="#5a2008" stop-opacity=".55"/></linearGradient>
<pattern id="roofc" patternUnits="userSpaceOnUse" x="10.05" y="0" width="16.25" height="600" patternTransform="skewX(7)"><rect width="16.25" height="600" fill="url(#rcol)"/></pattern>
<pattern id="roofr" patternUnits="userSpaceOnUse" x="0" y="303.5" width="1200" height="4.45"><rect width="1200" height="4.45" fill="url(#rrow)"/></pattern>
<pattern id="tile" patternUnits="userSpaceOnUse" x="505" y="455" width="26" height="38">
<rect width="26" height="38" fill="#cfa982"/>
<path d="M-4 4 L22 30 M9 -9 L35 17 M-17 17 L9 43" stroke="#dfc094" stroke-width="4" opacity=".6"/>
<path d="M4 -6 L-22 20 M30 0 L4 26 M30 13 L8 35" stroke="#c0987a" stroke-width="3" opacity=".4"/>
<path d="M13 10.5 L18.5 16 L13 21.5 L7.5 16 Z" fill="#4a7070"/>
<rect y="30.5" width="26" height="7.5" fill="#9c9e8a"/>
<ellipse cx="5" cy="34" rx="3.5" ry="3" fill="#84907f" opacity=".55"/><ellipse cx="18" cy="34.5" rx="4" ry="3" fill="#b0aa94" opacity=".6"/>
</pattern>
<pattern id="tileR" patternUnits="userSpaceOnUse" x="826" y="455" width="26" height="38">
<rect width="26" height="38" fill="#cfa982"/>
<path d="M-4 4 L22 30 M9 -9 L35 17 M-17 17 L9 43" stroke="#dfc094" stroke-width="4" opacity=".6"/>
<path d="M4 -6 L-22 20 M30 0 L4 26 M30 13 L8 35" stroke="#c0987a" stroke-width="3" opacity=".4"/>
<path d="M13 10.5 L18.5 16 L13 21.5 L7.5 16 Z" fill="#4a7070"/>
<rect y="30.5" width="26" height="7.5" fill="#9c9e8a"/>
<ellipse cx="5" cy="34" rx="3.5" ry="3" fill="#84907f" opacity=".55"/><ellipse cx="18" cy="34.5" rx="4" ry="3" fill="#b0aa94" opacity=".6"/>
</pattern>
<pattern id="tile2" patternUnits="userSpaceOnUse" x="571.6" y="464" width="30" height="46">
<rect width="30" height="46" fill="#cfa982"/>
<path d="M-5 5 L31 41 M10 -10 L40 20 M-20 10 L10 40" stroke="#dfc096" stroke-width="5" opacity=".6"/>
<path d="M5 -5 L-25 25 M35 0 L0 35" stroke="#c0987a" stroke-width="4" opacity=".4"/>
<path d="M15 14 L20.5 19.5 L15 25 L9.5 19.5 Z" fill="#4a7070"/>
<rect y="36" width="30" height="10" fill="#9c9e8a"/>
<ellipse cx="7" cy="41" rx="4.5" ry="4" fill="#84907f" opacity=".55"/><ellipse cx="22" cy="41" rx="5" ry="4" fill="#b0aa94" opacity=".6"/>
</pattern>
<pattern id="tile2R" patternUnits="userSpaceOnUse" x="758.7" y="464" width="30" height="46">
<rect width="30" height="46" fill="#cfa982"/>
<path d="M-5 5 L31 41 M10 -10 L40 20 M-20 10 L10 40" stroke="#dfc096" stroke-width="5" opacity=".6"/>
<path d="M5 -5 L-25 25 M35 0 L0 35" stroke="#c0987a" stroke-width="4" opacity=".4"/>
<path d="M15 14 L20.5 19.5 L15 25 L9.5 19.5 Z" fill="#4a7070"/>
<rect y="36" width="30" height="10" fill="#9c9e8a"/>
<ellipse cx="7" cy="41" rx="4.5" ry="4" fill="#84907f" opacity=".55"/><ellipse cx="22" cy="41" rx="5" ry="4" fill="#b0aa94" opacity=".6"/>
</pattern>
<radialGradient id="marb" cx=".5" cy=".5" r=".6"><stop offset="0" stop-color="#5e5e64"/><stop offset=".55" stop-color="#86868c"/><stop offset="1" stop-color="#9c9ca2"/></radialGradient>
<pattern id="glass" patternUnits="userSpaceOnUse" x="587" y="409.5" width="14" height="14.5"><rect width="14" height="14.5" fill="#8a8a90"/>
<ellipse cx="5" cy="5" rx="4" ry="3" fill="#68686e" opacity=".7"/>
<ellipse cx="10" cy="10" rx="3.5" ry="3" fill="#a4a4aa" opacity=".8"/>
<path d="M2 9 C4 7 6 12 9 9 M7 3 C9 5 11 2 13 4" stroke="#505056" stroke-width="1.1" fill="none" opacity=".7"/>
<rect x="-1" width="2.4" height="14.5" fill="#e2e6e6" opacity=".9"/>
<rect y="-1" width="14" height="2.4" fill="#e2e6e6" opacity=".9"/>
</pattern>
<pattern id="glassR" patternUnits="userSpaceOnUse" x="779" y="411" width="14" height="14.5"><rect width="14" height="14.5" fill="#8a8a90"/>
<ellipse cx="5" cy="5" rx="4" ry="3" fill="#68686e" opacity=".7"/>
<ellipse cx="10" cy="10" rx="3.5" ry="3" fill="#a4a4aa" opacity=".8"/>
<path d="M2 9 C4 7 6 12 9 9 M7 3 C9 5 11 2 13 4" stroke="#505056" stroke-width="1.1" fill="none" opacity=".7"/>
<rect x="-1" width="2.4" height="14.5" fill="#e2e6e6" opacity=".9"/>
<rect y="-1" width="14" height="2.4" fill="#e2e6e6" opacity=".9"/>
</pattern>
<pattern id="door" patternUnits="userSpaceOnUse" x="629" y="419" width="21" height="90">
<rect width="21" height="90" fill="#aabeb8"/>
<rect x="0.5" width="1" height="90" fill="#c6dcd6"/>
<rect x="2.5" width="1.5" height="90" fill="#94a8a2"/>
<rect x="5" width="1" height="90" fill="#cce2dc"/>
<rect x="7" width="2" height="90" fill="#9cb0aa"/>
<rect x="10" width="1" height="90" fill="#c2d8d2"/>
<rect x="12" width="1.5" height="90" fill="#92a6a0"/>
<rect x="14.5" width="1.3" height="90" fill="#d0e6e0"/>
<rect x="17" width="1.5" height="90" fill="#98aca6"/>
<rect x="19.5" width="1" height="90" fill="#c4dad4"/>
</pattern>
<pattern id="wood" patternUnits="userSpaceOnUse" x="0" y="493" width="160" height="34">
<rect width="160" height="34" fill="#46302a"/>
<path d="M0 4 C40 3 80 6 160 4.5" stroke="#503830" stroke-width="2" fill="none" opacity=".5"/>
<path d="M0 10 C50 11 100 8 160 10" stroke="#3c2822" stroke-width="2.5" fill="none" opacity=".5"/>
<path d="M0 16 C30 15 90 18 160 16" stroke="#4e362e" stroke-width="2" fill="none" opacity=".5"/>
<path d="M0 22 C60 23 110 20 160 22" stroke="#3c2822" stroke-width="2" fill="none" opacity=".5"/>
<path d="M0 28 C40 27 100 30 160 28" stroke="#50362e" stroke-width="2" fill="none" opacity=".5"/>
</pattern>
<clipPath id="roofclip"><path d="M528.5 303.5 L860 303.5 L883 347.5 L512 347.5 Z"/></clipPath>
<filter id="rblur" x="-5%" y="-20%" width="110%" height="140%"><feGaussianBlur stdDeviation="0.7"/></filter>
<pattern id="rr0" patternUnits="userSpaceOnUse" x="542.01" y="303.50" width="16.675" height="4.45"><rect width="16.675" height="4.45" fill="url(#rcol)"/><rect width="16.675" height="4.45" fill="url(#rrow)"/></pattern>
<pattern id="rr1" patternUnits="userSpaceOnUse" x="540.51" y="307.95" width="16.875" height="4.45"><rect width="16.875" height="4.45" fill="url(#rcol)"/><rect width="16.875" height="4.45" fill="url(#rrow)"/></pattern>
<pattern id="rr2" patternUnits="userSpaceOnUse" x="539.01" y="312.40" width="17.074" height="4.45"><rect width="17.074" height="4.45" fill="url(#rcol)"/><rect width="17.074" height="4.45" fill="url(#rrow)"/></pattern>
<pattern id="rr3" patternUnits="userSpaceOnUse" x="537.52" y="316.85" width="17.274" height="4.45"><rect width="17.274" height="4.45" fill="url(#rcol)"/><rect width="17.274" height="4.45" fill="url(#rrow)"/></pattern>
<pattern id="rr4" patternUnits="userSpaceOnUse" x="536.02" y="321.30" width="17.474" height="4.45"><rect width="17.474" height="4.45" fill="url(#rcol)"/><rect width="17.474" height="4.45" fill="url(#rrow)"/></pattern>
<pattern id="rr5" patternUnits="userSpaceOnUse" x="534.52" y="325.75" width="17.674" height="4.45"><rect width="17.674" height="4.45" fill="url(#rcol)"/><rect width="17.674" height="4.45" fill="url(#rrow)"/></pattern>
<pattern id="rr6" patternUnits="userSpaceOnUse" x="533.02" y="330.20" width="17.873" height="4.45"><rect width="17.873" height="4.45" fill="url(#rcol)"/><rect width="17.873" height="4.45" fill="url(#rrow)"/></pattern>
<pattern id="rr7" patternUnits="userSpaceOnUse" x="531.53" y="334.65" width="18.073" height="4.45"><rect width="18.073" height="4.45" fill="url(#rcol)"/><rect width="18.073" height="4.45" fill="url(#rrow)"/></pattern>
<pattern id="rr8" patternUnits="userSpaceOnUse" x="530.03" y="339.10" width="18.273" height="4.45"><rect width="18.273" height="4.45" fill="url(#rcol)"/><rect width="18.273" height="4.45" fill="url(#rrow)"/></pattern>
<pattern id="rr9" patternUnits="userSpaceOnUse" x="528.53" y="343.55" width="18.473" height="4.45"><rect width="18.473" height="4.45" fill="url(#rcol)"/><rect width="18.473" height="4.45" fill="url(#rrow)"/></pattern>
</defs>
<rect x="60" y="131" width="1218" height="525" fill="#9aba8e"/>
<rect x="60" y="132" width="1218" height="262" fill="url(#sky)"/>
<rect x="60" y="131" width="1218" height="1" fill="#5a5a5a"/>
<rect x="1277" y="131" width="1" height="525" fill="#8a8a8a"/>
<!-- axes -->
<line x1="60" y1="471.5" x2="456" y2="471.5" stroke="#4aa84a" stroke-width="1" stroke-dasharray="1.5 3" opacity=".8"/>
<line x1="883" y1="472" x2="1277" y2="472" stroke="#22a822" stroke-width="1.2"/>
<line x1="497.5" y1="132" x2="497.5" y2="412" stroke="#2a3ac8" stroke-width="1.2"/>
<line x1="497.5" y1="526" x2="497.5" y2="656" stroke="#3a4ab8" stroke-width="1" stroke-dasharray="2 3"/>
<line x1="456" y1="492.5" x2="100" y2="655.5" stroke="#9c5434" stroke-width="1.5"/>
<!-- floor -->
<path d="M456 493 L883 493 L954 526.5 L385 526.5 Z" fill="url(#wood)" stroke="#1e140e" stroke-width="1.1"/>
<!-- back wall -->
<rect x="512.5" y="347" width="370.5" height="146.5" fill="#8fa5bd" stroke="#222" stroke-width="1"/>
<rect x="512.5" y="455" width="63.5" height="38.5" fill="url(#tile)" stroke="#222" stroke-width="1"/><rect x="813" y="455" width="70" height="38.5" fill="url(#tileR)" stroke="#222" stroke-width="1"/>
<line x1="813" y1="373" x2="883" y2="373" stroke="#2a3440" stroke-width="1.3"/>
<line x1="589.5" y1="347" x2="589.5" y2="364" stroke="#2a3440" stroke-width="1.2"/>
<!-- roof -->
<g clip-path="url(#roofclip)"><g filter="url(#rblur)"><rect x="505" y="303.50" width="385" height="5.4" fill="url(#rr0)"/><rect x="505" y="307.95" width="385" height="5.4" fill="url(#rr1)"/><rect x="505" y="312.40" width="385" height="5.4" fill="url(#rr2)"/><rect x="505" y="316.85" width="385" height="5.4" fill="url(#rr3)"/><rect x="505" y="321.30" width="385" height="5.4" fill="url(#rr4)"/><rect x="505" y="325.75" width="385" height="5.4" fill="url(#rr5)"/><rect x="505" y="330.20" width="385" height="5.4" fill="url(#rr6)"/><rect x="505" y="334.65" width="385" height="5.4" fill="url(#rr7)"/><rect x="505" y="339.10" width="385" height="5.4" fill="url(#rr8)"/><rect x="505" y="343.55" width="385" height="5.4" fill="url(#rr9)"/></g></g><path d="M528.5 303.5 L860 303.5 L883 347.5 L512 347.5 Z" fill="none" stroke="#2a1a12" stroke-width="1.2"/>
<!-- front part -->
<path d="M576 369.5 L695.5 330 L813 369.5 Z" fill="#b4b4b4" stroke="#1a1a1a" stroke-width="1.1"/>
<rect x="576" y="369.5" width="237" height="140.5" fill="#8fa5bd" stroke="#1a1a1a" stroke-width="1.1"/>
<rect x="576" y="464" width="44.5" height="46" fill="url(#tile2)" stroke="#222" stroke-width=".8"/>
<rect x="766.5" y="464" width="46.5" height="46" fill="url(#tile2R)" stroke="#222" stroke-width=".8"/>
<rect x="582" y="396" width="29.5" height="67.5" fill="url(#glass)" stroke="#111" stroke-width="1"/>
<rect x="774.5" y="398.5" width="32.5" height="65" fill="url(#glassR)" stroke="#111" stroke-width="1"/>
<rect x="620.5" y="410.5" width="146" height="99.5" fill="#696969" stroke="#1a1a1a" stroke-width="1"/>
<rect x="629.2" y="418.7" width="129.3" height="88" fill="url(#door)" stroke="#1a1a1a" stroke-width="1"/>
<rect x="629.2" y="506" width="129.3" height="4" fill="#555"/>
<line x1="693.6" y1="419" x2="693.6" y2="510" stroke="#1a1a1a" stroke-width="1.2"/>
<!-- small window -->
<rect x="840.5" y="391" width="32.5" height="24.5" fill="#6e6e6e" stroke="#2a2a2a" stroke-width="1"/>
<rect x="843.5" y="395" width="27" height="16.5" fill="#d6d6da" stroke="#111" stroke-width="1.2"/>
<path d="M848 398 L850 404 M852 397 C854 400 855 404 853 407 M857 398 L859 403 L856 406 M861 397 C863 400 864 405 862 408 M866 398 L865 404" stroke="#9a9aa2" stroke-width="1" fill="none"/>
<!-- fence -->
<line x1="497.5" y1="412" x2="497.5" y2="473" stroke="#14207a" stroke-width="1.3"/>
<g stroke="#111" stroke-width="1">
<rect x="466" y="412.5" width="45.5" height="6.5" fill="#fff"/>
<rect x="466" y="472.5" width="45.5" height="8.5" fill="#fff"/>
</g>
<g>
<path d="M470 488 L470 409 L472.5 404.5 L475 409 L475 488 Z" fill="#fff" stroke="#111" stroke-width="1"/><rect x="475" y="409" width="1.6" height="79" fill="#111"/>
<path d="M480.3 488 L480.3 409 L482.8 404.5 L485.3 409 L485.3 488 Z" fill="#fff" stroke="#111" stroke-width="1"/><rect x="485.3" y="409" width="1.6" height="79" fill="#111"/>
<path d="M490.6 488 L490.6 409 L493.1 404.5 L495.6 409 L495.6 488 Z" fill="#fff" stroke="#111" stroke-width="1"/><rect x="495.6" y="409" width="1.6" height="79" fill="#111"/>
<path d="M500.9 488 L500.9 409 L503.4 404.5 L505.9 409 L505.9 488 Z" fill="#fff" stroke="#111" stroke-width="1"/><rect x="505.9" y="409" width="1.6" height="79" fill="#111"/>
<path d="M456.5 495 L456.5 404 C456.5 401.5 458 401 461.5 401 C465 401 466.5 401.5 466.5 404 L466.5 495 Z" fill="#fff" stroke="#111" stroke-width="1"/>
<path d="M458 402.5 C459 401.5 464 401.5 465 402.5" stroke="#888" stroke-width="1.2" fill="none"/>
</g>
</svg>
<div class="a" style="left:63px;top:131px;height:18px;line-height:18px;color:#0a2440">Right</div>
<div class="a" style="left:0;top:656px;width:1280px;height:25px;background:#f0f0f0"></div>
<div class="a" style="left:0;top:655px;width:59px;height:1px;background:#a0a0a0"></div>
<svg class="a" style="left:0;top:656px" width="120" height="25" viewBox="0 656 120 25">
<defs><radialGradient id="hq" cx=".4" cy=".35" r=".7"><stop offset="0" stop-color="#f4faff"/><stop offset=".6" stop-color="#a8d0f0"/><stop offset="1" stop-color="#3a78b0"/></radialGradient></defs>
<circle cx="12.3" cy="670" r="8.2" fill="#f6ead0" stroke="#7a5a28" stroke-width="2"/>
<path d="M12.3 663.5 C15 663.5 15.5 667 14 669 L13 671 L13 676 L11.6 676 L11.6 671 L10.6 669 C9 667 9.6 663.5 12.3 663.5Z" fill="#eaa8a0"/>
<circle cx="38.4" cy="670" r="8.2" fill="#f6ead0" stroke="#7a5a28" stroke-width="2"/>
<circle cx="38.4" cy="664.8" r="1.6" fill="#111"/><path d="M36.6 667 L40.2 667 L40.6 672 L39.5 672 L39.4 676 L37.4 676 L37.3 672 L36.2 672 Z" fill="#111"/>
<circle cx="64.6" cy="670" r="8.2" fill="#f6ead0" stroke="#7a5a28" stroke-width="2"/>
<text x="64.6" y="675" font-family="Liberation Serif" font-size="13" fill="#a89878" text-anchor="middle">G</text>
<rect x="82" y="660" width="1" height="20" fill="#b8b8b8"/>
<circle cx="100" cy="670" r="8.6" fill="url(#hq)" stroke="#16385a" stroke-width="1.8"/>
<text x="100" y="675.5" font-family="Liberation Sans" font-size="15" fill="#111" text-anchor="middle">?</text>
</svg>
<div class="a" style="left:114px;top:659px;width:837px;height:22px;border-top:1px solid #d0d0d0;border-left:1px solid #d8d8d8;border-right:1px solid #e4e4e4"></div>
<div class="a" style="left:116px;top:662px;height:18px;line-height:18px;color:#1a1a1a;-webkit-text-stroke:0.15px #1a1a1a">Ready</div>
<div class="a" style="left:957px;top:660px;width:1px;height:21px;background:#b8b8b8"></div>
<div class="a" style="left:1003px;top:662px;height:18px;line-height:18px;color:#1a1a1a;-webkit-text-stroke:0.15px #1a1a1a;transform:scaleX(0.99);transform-origin:0 0">Measurements</div>
<div class="a" style="left:1087px;top:659px;width:193px;height:22px;border-top:1px solid #d0d0d0;border-left:1px solid #c8c8c8"></div>
<div class="a" style="left:0;top:681px;width:1280px;height:38px;background:linear-gradient(90deg,#d0ecec 0%,#d0ecec 84%,#dfece2 90%,#ece9d8 97%,#eee8d6 100%)"></div>
<div class="a" style="left:0;top:681px;width:46px;height:38px;background:#e6e6e4"></div>
<svg class="a" style="left:15px;top:692px" width="16" height="16" viewBox="0 0 16 16"><path d="M0 2.2 L6.6 1.2 L6.6 7.4 L0 7.4 Z M7.6 1 L15 0 L15 7.4 L7.6 7.4 Z M0 8.4 L6.6 8.4 L6.6 14.6 L0 13.7 Z M7.6 8.4 L15 8.4 L15 15.6 L7.6 14.8 Z" fill="#111"/></svg>
<div class="a" style="left:46px;top:682px;width:320px;height:37px;background:#fff"></div>
<svg class="a" style="left:55px;top:690px" width="20" height="20" viewBox="0 0 20 20"><circle cx="12" cy="8" r="5.5" fill="none" stroke="#222" stroke-width="1.4"/><path d="M8 12 L2 18" stroke="#222" stroke-width="1.6"/></svg>
<div class="a" style="left:83px;top:691px;height:20px;line-height:20px;font-size:14px;color:#454545;white-space:nowrap;transform:scaleX(0.96);transform-origin:0 0">Type here to search</div>
<svg class="a" style="left:0;top:681px" width="1280" height="38" viewBox="0 681 1280 38">
<defs>
<linearGradient id="edge" x1="0" y1="0" x2="1" y2="1"><stop offset="0" stop-color="#38c86a"/><stop offset=".5" stop-color="#1a9ad8"/><stop offset="1" stop-color="#1460c0"/></linearGradient>
<linearGradient id="folder" x1="0" y1="0" x2="0" y2="1"><stop offset="0" stop-color="#ffd75a"/><stop offset="1" stop-color="#f0b830"/></linearGradient>
</defs>
<!-- task view -->
<g stroke="#222" stroke-width="1.3" fill="none"><rect x="382" y="694" width="9" height="11"/><path d="M380 692 L393 692 M380 707 L393 707"/></g><rect x="395" y="694" width="1.6" height="2" fill="#222"/><rect x="395" y="698" width="1.6" height="7" fill="#222"/>
<!-- edge -->
<circle cx="437" cy="700" r="11" fill="url(#edge)"/><path d="M430 702 C430 696 436 694 440 696 C444 698 443 702 439 702 L433 702 C434 706 440 708 446 705 C444 710 433 711 430 702Z" fill="#e8f6ff" opacity=".85"/>
<!-- store -->
<path d="M473 693 L493 693 L493 709 C493 710 492 711 491 711 L475 711 C474 711 473 710 473 709 Z" fill="#1a5ab8"/><path d="M478 693 C478 688 488 688 488 693" stroke="#2a78d8" stroke-width="1.6" fill="none"/>
<rect x="478" y="697" width="4" height="4" fill="#f25022"/><rect x="483" y="697" width="4" height="4" fill="#7fba00"/><rect x="478" y="702" width="4" height="4" fill="#00a4ef"/><rect x="483" y="702" width="4" height="4" fill="#ffb900"/>
<!-- firefox -->
<circle cx="529" cy="700" r="11" fill="#f06a20"/><circle cx="531" cy="699" r="6.5" fill="#8a3ac8" opacity=".45"/><path d="M519 703 C521 711 535 713 539 704 C537 708 528 709 525 703 C523 699 527 696 529 697 C526 693 520 696 519 703Z" fill="#f8a020"/>
<!-- explorer -->
<rect x="565" y="692" width="20" height="17" rx="1" fill="url(#folder)"/><rect x="565" y="690" width="8" height="4" fill="#f0b830"/><path d="M568 708 L568 701 L582 701 L582 708 L579 708 L579 704 L571 704 L571 708 Z" fill="#3a8ad8"/>
<rect x="556" y="716" width="38" height="3" fill="#1a9cb0"/>
<!-- amazon -->
<rect x="611" y="689" width="22" height="22" fill="#fff"/><text x="622" y="703" font-family="Liberation Sans" font-size="13" fill="#555" text-anchor="middle">a</text><path d="M614 706 L630 706" stroke="#e44" stroke-width="2" stroke-dasharray="2 2"/>
<!-- mail -->
<path d="M656 694 L667 689 L678 694 L678 710 L656 710 Z" fill="#1a78d0"/><path d="M656 694 L667 701 L678 694 L678 697 L667 704 L656 697Z" fill="#e8f4ff"/><path d="M656 710 L667 702 L678 710Z" fill="#3a9af0"/>
<!-- avast secure browser -->
<circle cx="713" cy="700" r="10.5" fill="#f0a030"/><circle cx="713" cy="700" r="10.5" fill="none" stroke="#8a4ad8" stroke-width="3" stroke-dasharray="22 44"/><circle cx="713" cy="700" r="6.5" fill="#fff"/><circle cx="713" cy="699" r="2" fill="#333"/><rect x="712.2" y="700" width="1.6" height="3.5" fill="#333"/>
<!-- chrome -->
<circle cx="758.5" cy="700" r="11" fill="#db4437"/><path d="M758.5 700 L749 705.5 A11 11 0 0 0 764 709.5 Z" fill="#0f9d58"/><path d="M758.5 700 L764 709.5 A11 11 0 0 0 769.5 700 L758.5 689 Z" fill="#f4b400"/><path d="M758.5 689 L769.5 700 L758.5 700Z" fill="#db4437"/><circle cx="758.5" cy="700" r="5" fill="#fff"/><circle cx="758.5" cy="700" r="3.8" fill="#4285f4"/>
<rect x="740" y="716" width="37.5" height="3" fill="#1a9cb0"/>
<!-- zoom -->
<rect x="793.5" y="689" width="22" height="22" rx="7" fill="#4a8cf0"/><rect x="798" y="696" width="9" height="8" rx="1.5" fill="#fff"/><path d="M808 698.5 L812 696 L812 704 L808 701.5Z" fill="#fff"/>
<!-- wps -->
<path d="M840 692 L845 692 L848 703 L851 692 L855 692 L858 703 L861 692 L864 692 L859 709 L855 709 L851.5 699 L848 709 L844 709 Z" fill="#e63a2a"/>
<!-- sketchup highlighted -->
<rect x="874" y="681" width="44.7" height="38" fill="#e2f2f2"/>
<path d="M886 692 L900 689 L907 695 L905 708 L893 712 L888 706 Z" fill="#e32b2b"/><path d="M889 695 L899 693 L903 696 L892 698 Z M891 700 L898 699 L898 701.5 L892 702.5 Z M892 705 L896 704.5 L896 706.5 L893 707 Z" fill="#fbd0d0"/>
<rect x="874" y="716" width="44.7" height="3" fill="#1a9cb0"/>
<!-- tray -->
<path d="M970 692 C964 694 961 700 964 705 C967 710 974 710 977 706 C972 707 967 703 968 698 C968 695 969 693 970 692Z" fill="#f5c020"/>
<path d="M1030 703 L1035 698 L1040 703" stroke="#222" stroke-width="1.3" fill="none"/>
<g stroke="#333" stroke-width="1.1" fill="none"><rect x="1053" y="694.5" width="7" height="10" rx="2"/><path d="M1060.5 697 L1063 695.5 L1063 703.5 L1060.5 702 M1054 692.5 L1059 692.5 M1054 707 L1059 707"/></g>
<g stroke="#333" stroke-width="1.2" fill="none"><path d="M1073 706 C1074 699 1079 695 1086 694"/><path d="M1076 706 C1077 701 1080 698 1085 697.5"/><path d="M1079 706 C1079.5 703 1081 701.5 1084 701"/></g><rect x="1083" y="703" width="3" height="3" fill="#333"/>
<path d="M1095 696 L1099 696 M1097 693 L1097 699" stroke="#111" stroke-width="1.3"/><rect x="1099" y="696" width="11" height="8" fill="#111"/><rect x="1110" y="698" width="2" height="4" fill="#111"/><path d="M1101 700 L1108 700" stroke="#eee" stroke-width="1"/>
<g stroke="#222" stroke-width="1.2" fill="none"><path d="M1118 697 L1121 697 L1125 693 L1125 707 L1121 703 L1118 703 Z"/><path d="M1128 697 C1130 699 1130 701 1128 703 M1131 695 C1134 698 1134 702 1131 705"/></g>
</svg>
<div class="a" style="left:986px;top:691px;height:20px;line-height:20px;font-size:14px;color:#222;white-space:nowrap;transform:scaleX(0.88);transform-origin:0 0">26°C</div>
<div class="a" style="left:1143px;top:692px;height:16px;line-height:16px;font-size:12px;color:#222;white-space:nowrap;transform:scaleX(0.86);transform-origin:0 0">ENG</div>
<div class="a" style="left:1180px;top:684px;height:16px;line-height:16px;font-size:12px;color:#222;white-space:nowrap;transform:scaleX(0.93);transform-origin:0 0">1:48 AM</div>
<div class="a" style="left:1179px;top:701px;height:16px;line-height:16px;font-size:12px;color:#222;white-space:nowrap;transform:scaleX(0.93);transform-origin:0 0">5/1/2022</div>
<svg class="a" style="left:1240px;top:691px" width="18" height="18" viewBox="0 0 18 18"><path d="M2 2 L16 2 L16 13 L11 13 L8 16.5 L8 13 L2 13 Z" fill="#111"/><path d="M5 5.5 L13 5.5 M5 8 L13 8 M5 10.5 L10 10.5" stroke="#eee" stroke-width="1"/></svg>
</body></html>
